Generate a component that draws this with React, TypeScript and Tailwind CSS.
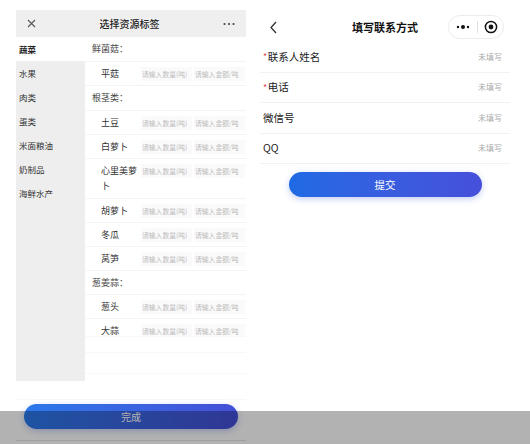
import React from "react";

const font = { fontFamily: '"Noto Sans CJK SC", "Noto Sans", sans-serif' };

type Row =
  | { kind: "group"; title: string }
  | { kind: "item"; name: string; tall?: boolean };

const rows: Row[] = [
  { kind: "group", title: "鲜菌菇：" },
  { kind: "item", name: "平菇" },
  { kind: "group", title: "根茎类：" },
  { kind: "item", name: "土豆" },
  { kind: "item", name: "白萝卜" },
  { kind: "item", name: "心里美萝卜", tall: true },
  { kind: "item", name: "胡萝卜" },
  { kind: "item", name: "冬瓜" },
  { kind: "item", name: "莴笋" },
  { kind: "group", title: "葱姜蒜：" },
  { kind: "item", name: "葱头" },
  { kind: "item", name: "大蒜" },
];

const cats = ["蔬菜", "水果", "肉类", "蛋类", "米面粮油", "奶制品", "海鲜水产"];

function FakeInput({ text }: { text: string }) {
  return (
    <div className="w-[51px] h-[14px] bg-[#fafafa] overflow-hidden whitespace-nowrap text-[6.8px] leading-[14px] text-[#bdbdbd] pl-[1px]">
      {text}
    </div>
  );
}

function LeftScreen() {
  return (
    <div className="w-[230px] ml-[16px] flex flex-col">
      <div className="mt-[10px] h-[27px] bg-[#efefef] flex items-center justify-between px-[11px]">
        <svg width="9" height="9" viewBox="0 0 9 9">
          <path d="M1 1L8 8M8 1L1 8" stroke="#555" strokeWidth="1.1" />
        </svg>
        <div className="text-[10px] text-[#222] font-medium">选择资源标签</div>
        <svg width="12" height="4" viewBox="0 0 12 4">
          <circle cx="1.5" cy="2" r="1.1" fill="#444" />
          <circle cx="6" cy="2" r="1.1" fill="#444" />
          <circle cx="10.5" cy="2" r="1.1" fill="#444" />
        </svg>
      </div>
      <div className="flex h-[344px]">
        <div className="w-[69px] bg-[#eeeeee] flex flex-col">
          {cats.map((c, i) => (
            <div
              key={c}
              className={
                i === 0
                  ? "h-6 flex items-center pl-[3px] bg-white text-[8.5px] text-[#222] font-bold"
                  : "h-6 flex items-center pl-[3px] text-[8.5px] text-[#333]"
              }
            >
              {c}
            </div>
          ))}
        </div>
        <div className="flex-1 flex flex-col bg-white">
          <div className="h-[299px] overflow-hidden flex flex-col">
            {rows.map((r, i) =>
              r.kind === "group" ? (
                <div
                  key={i}
                  className={`${i === 0 ? "h-[24px]" : "h-[24.5px] border-t border-[#f4f4f4]"} shrink-0 flex items-center pl-[7px] text-[9px] text-[#444]`}
                >
                  {r.title}
                </div>
              ) : (
                <div
                  key={i}
                  className={`${r.tall ? "h-[40px]" : "h-[24px]"} shrink-0 border-t border-[#f4f4f4] flex items-start pt-[5px] pl-[16px]`}
                >
                  <div className="w-[40px] text-[9px] leading-[15px] text-[#333] -mt-[1px]">{r.name}</div>
                  <div className="flex gap-[2px]">
                    <FakeInput text="请输入数量(吨)" />
                    <FakeInput text="请输入金额/吨" />
                  </div>
                </div>
              )
            )}
          </div>
          <div className="h-[16px] border-t border-[#f8f8f8]" />
          <div className="h-[21px] border-t border-[#f8f8f8]" />
          <div className="flex-1 border-t border-[#f8f8f8]" />
        </div>
      </div>
      <div className="h-[19px] border-b border-[#f8f8f8]" />
      <div className="mt-[4px] ml-[8px] w-[214px] h-[25px] rounded-full bg-gradient-to-r from-[#2a78ea] to-[#434fd6] flex items-center justify-center text-[10px] text-white shadow-[0_2px_6px_rgba(60,90,220,0.3)]">
        完成
      </div>
      <div className="mt-[11px] h-px bg-[#e4e4e4]" />
    </div>
  );
}

function RightScreen() {
  const items = [
    { label: "联系人姓名", req: true },
    { label: "电话", req: true },
    { label: "微信号", req: false },
    { label: "QQ", req: false },
  ];
  return (
    <div className="w-[250px] ml-[14px] flex flex-col">
      <div className="mt-[14px] h-[26px] relative flex items-center justify-center">
        <div className="absolute left-[9px] top-[7px]">
          <svg width="9" height="13" viewBox="0 0 9 13">
            <path d="M7 1L2 6.5L7 12" stroke="#333" strokeWidth="1.3" fill="none" />
          </svg>
        </div>
        <div className="text-[11px] font-bold text-[#111]">填写联系方式</div>
        <div className="absolute left-[188px] top-[1px] w-[56px] h-[24px] rounded-full border border-[#ececec] bg-white flex items-center">
          <div className="w-[28px] flex items-center justify-center">
            <svg width="14" height="6" viewBox="0 0 14 6">
              <circle cx="2" cy="3" r="1.2" fill="#111" />
              <circle cx="7" cy="3" r="2" fill="#111" />
              <circle cx="12" cy="3" r="1.2" fill="#111" />
            </svg>
          </div>
          <div className="w-px h-[12px] bg-[#e0e0e0]" />
          <div className="flex-1 flex items-center justify-center">
            <svg width="14" height="14" viewBox="0 0 14 14">
              <circle cx="7" cy="7" r="5.6" stroke="#111" strokeWidth="1.5" fill="none" />
              <circle cx="7" cy="7" r="2.4" fill="#111" />
            </svg>
          </div>
        </div>
      </div>
      <div className="mt-[2px] flex flex-col">
        {items.map((it) => (
          <div
            key={it.label}
            className="h-[30.5px] border-b border-[#f2f2f2] flex items-center justify-between pl-[3px] pr-[8px]"
          >
            <div className="text-[10.5px] text-[#222] flex items-center">
              {it.req && <span className="text-[#e5484d] text-[9px] mr-[0.5px]">*</span>}
              {it.label}
            </div>
            <div className="text-[8px] text-[#aaaaaa]">未填写</div>
          </div>
        ))}
      </div>
      <div className="mt-[8px] mx-auto w-[193px] h-[25px] rounded-full bg-gradient-to-r from-[#1f6ae4] to-[#4650da] flex items-center justify-center text-[10.5px] text-white shadow-[0_2px_6px_rgba(60,90,220,0.3)]">
        提交
      </div>
    </div>
  );
}

export default function App() {
  return (
    <div className="relative w-[530px] h-[444px] overflow-hidden bg-white flex" style={font}>
      <LeftScreen />
      <RightScreen />
      <div className="absolute left-0 right-0 top-[411px] bottom-0 bg-black/30" />
    </div>
  );
}
